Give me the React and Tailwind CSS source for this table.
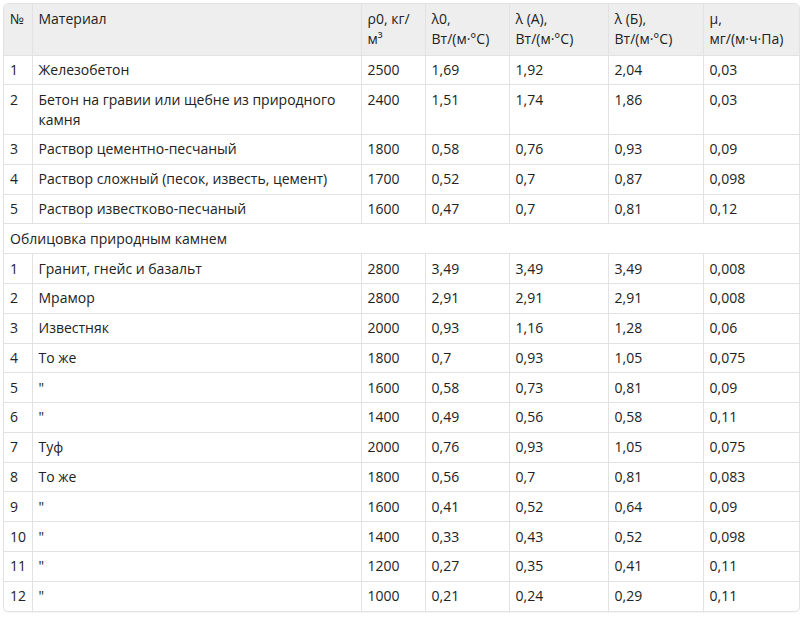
import React from "react";

const rowsA = [
  ["1", "Железобетон", "2500", "1,69", "1,92", "2,04", "0,03"],
  ["2", "Бетон на гравии или щебне из природного камня", "2400", "1,51", "1,74", "1,86", "0,03"],
  ["3", "Раствор цементно-песчаный", "1800", "0,58", "0,76", "0,93", "0,09"],
  ["4", "Раствор сложный (песок, известь, цемент)", "1700", "0,52", "0,7", "0,87", "0,098"],
  ["5", "Раствор известково-песчаный", "1600", "0,47", "0,7", "0,81", "0,12"],
];

const rowsB = [
  ["1", "Гранит, гнейс и базальт", "2800", "3,49", "3,49", "3,49", "0,008"],
  ["2", "Мрамор", "2800", "2,91", "2,91", "2,91", "0,008"],
  ["3", "Известняк", "2000", "0,93", "1,16", "1,28", "0,06"],
  ["4", "То же", "1800", "0,7", "0,93", "1,05", "0,075"],
  ["5", "\"", "1600", "0,58", "0,73", "0,81", "0,09"],
  ["6", "\"", "1400", "0,49", "0,56", "0,58", "0,11"],
  ["7", "Туф", "2000", "0,76", "0,93", "1,05", "0,075"],
  ["8", "То же", "1800", "0,56", "0,7", "0,81", "0,083"],
  ["9", "\"", "1600", "0,41", "0,52", "0,64", "0,09"],
  ["10", "\"", "1400", "0,33", "0,43", "0,52", "0,098"],
  ["11", "\"", "1200", "0,27", "0,35", "0,41", "0,11"],
  ["12", "\"", "1000", "0,21", "0,24", "0,29", "0,11"],
];

const cell = "border border-[#e2e2e2] px-[6px] py-[4.4px] align-top";

function Row({ r }) {
  return (
    <tr>
      {r.map((v, i) => (
        <td key={i} className={cell}>{v}</td>
      ))}
    </tr>
  );
}

export default function App() {
  return (
    <div className="bg-white min-h-screen p-[3px]" style={{ fontFamily: '"Open Sans", "Noto Sans", sans-serif' }}>
      <div className="w-[797px] border border-[#e2e2e2] rounded-[5px] overflow-hidden shadow-[0_1px_1px_rgba(0,0,0,0.04)]">
        <table className="w-full table-fixed border-collapse border-hidden text-[14px] leading-[20px] text-[#222]">
          <colgroup>
            <col className="w-[28px]" />
            <col className="w-[329px]" />
            <col className="w-[64px]" />
            <col className="w-[84px]" />
            <col className="w-[99px]" />
            <col className="w-[95px]" />
            <col />
          </colgroup>
          <thead>
            <tr className="bg-[#eeeeee]">
              <th className={`${cell} font-normal text-left pt-[5px] pb-[5.5px]`}>№</th>
              <th className={`${cell} font-normal text-left pt-[5px] pb-[5.5px]`}>Материал</th>
              <th className={`${cell} font-normal text-left pt-[5px] pb-[5.5px]`}>ρ0, кг/м³</th>
              <th className={`${cell} font-normal text-left pt-[5px] pb-[5.5px]`}>λ0, Вт/(м·°C)</th>
              <th className={`${cell} font-normal text-left pt-[5px] pb-[5.5px]`}>λ (А), Вт/(м·°C)</th>
              <th className={`${cell} font-normal text-left pt-[5px] pb-[5.5px]`}>λ (Б), Вт/(м·°C)</th>
              <th className={`${cell} font-normal text-left pt-[5px] pb-[5.5px]`}>μ, мг/(м·ч·Па)</th>
            </tr>
          </thead>
          <tbody>
            {rowsA.map((r, i) => <Row key={"a" + i} r={r} />)}
            <tr>
              <td colSpan={7} className={cell}>Облицовка природным камнем</td>
            </tr>
            {rowsB.map((r, i) => <Row key={"b" + i} r={r} />)}
          </tbody>
        </table>
      </div>
    </div>
  );
}
